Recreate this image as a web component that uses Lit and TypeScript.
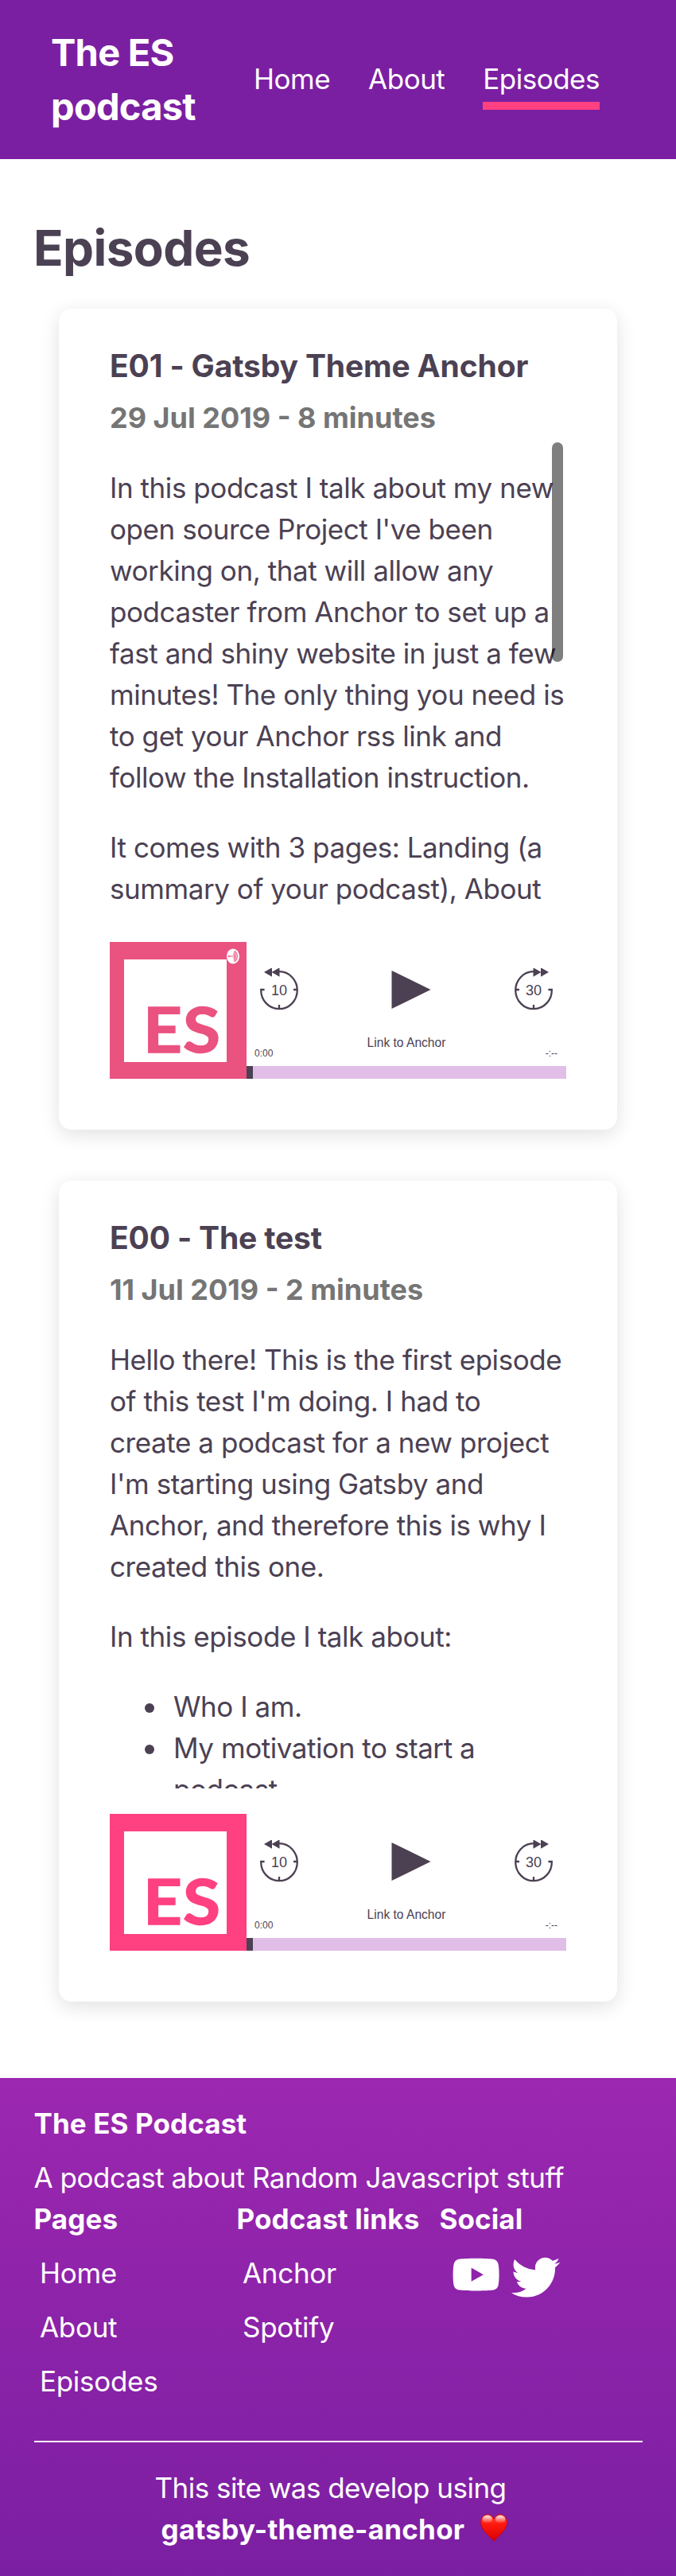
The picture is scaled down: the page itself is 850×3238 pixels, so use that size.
import { LitElement, html, css, svg } from "lit";
import { customElement, property } from "lit/decorators.js";

interface Episode {
  title: string;
  meta: string;
  paragraphs: string[];
  list: string[];
  badge: boolean;
  scrollbar: boolean;
}

const EPISODES: Episode[] = [
  {
    title: "E01 - Gatsby Theme Anchor",
    meta: "29 Jul 2019 - 8 minutes",
    paragraphs: [
      "In this podcast I talk about my new\nopen source Project I've been\nworking on, that will allow any\npodcaster from Anchor to set up a\nfast and shiny website in just a few\nminutes! The only thing you need is\nto get your Anchor rss link and\nfollow the Installation instruction.",
      "It comes with 3 pages: Landing (a\nsummary of your podcast), About",
    ],
    list: [],
    badge: true,
    scrollbar: true,
  },
  {
    title: "E00 - The test",
    meta: "11 Jul 2019 - 2 minutes",
    paragraphs: [
      "Hello there! This is the first episode\nof this test I'm doing. I had to\ncreate a podcast for a new project\nI'm starting using Gatsby and\nAnchor, and therefore this is why I\ncreated this one.",
      "In this episode I talk about:",
    ],
    list: ["Who I am.", "My motivation to start a\npodcast."],
    badge: false,
    scrollbar: false,
  },
];

@customElement("episode-player")
class EpisodePlayer extends LitElement {
  @property({ type: Boolean }) badge = false;

  static styles = css`
    :host { display: flex; height: 172px; font-family: "Liberation Sans", Arial, sans-serif; color: #4b4153; }
    .cover { flex: none; width: 172px; height: 172px; display: block; color: #ff4081; }
    .cover.muted { color: #ea5280; }
    .mark { font-family: Lato, sans-serif; font-weight: 700; font-size: 79px; stroke: currentColor; stroke-width: 1.4px; }
    .panel { flex: 1; display: flex; flex-direction: column; }
    .buttons { display: flex; justify-content: space-between; padding: 33px 16px 0; height: 54px; }
    .buttons svg { display: block; }
    .seconds { font-size: 18px; }
    .link { margin-top: 30px; text-align: center; font-size: 15.6px; line-height: 20px; }
    .times { display: flex; justify-content: space-between; margin-top: -4px; padding: 0 11px 0 10px; font-size: 12px; line-height: 14px; }
    .track { display: flex; margin-top: auto; height: 16px; background: #e1bee7; }
    .played { width: 8px; background: #4b4153; }
  `;

  render() {
    return html`
      <svg class="cover ${this.badge ? "muted" : ""}" viewBox="0 0 172 172">
        <rect width="172" height="172" fill="currentColor" />
        <rect x="18" y="22" width="129" height="129" fill="#fff" />
        <text class="mark" x="42" y="139" textLength="49" lengthAdjust="spacingAndGlyphs" fill="currentColor">E</text>
        <text class="mark" x="92" y="139" textLength="47" lengthAdjust="spacingAndGlyphs" fill="currentColor">S</text>
        ${this.badge
          ? svg`<ellipse cx="155" cy="18" rx="8" ry="9.6" fill="#fff" />
            <g fill="none" stroke="currentColor" stroke-width="1.1">
              <path d="M149.5 18h6M155.5 14.8q2.6 3.2 0 6.4M156 12.6q5 5.4 0 10.8M157 11q7 7 0 14" />
            </g><circle cx="149.8" cy="18" r="1.1" fill="currentColor" />`
          : ""}
      </svg>
      <div class="panel">
        <div class="buttons">
          <svg width="50" height="54" viewBox="0 0 50 54">
            <path d="M6.6 27H2.2A22.8 23.5 0 1 0 25 4.2M43 27h5M25 46v5" fill="none" stroke="currentColor" stroke-width="2.3" />
            <path d="M6 4.2L16 -1.5V9.9zM15.5 4.2L25.5 -1.5V9.9z" fill="currentColor" transform="translate(0 .8)" />
            <text class="seconds" x="25" y="34" text-anchor="middle" fill="currentColor">10</text>
          </svg>
          <svg width="62" height="54" viewBox="0 0 62 54">
            <path d="M12.5 3v48L61.5 27z" fill="currentColor" />
          </svg>
          <svg width="50" height="54" viewBox="0 0 50 54">
            <path d="M43.4 27H47.8A22.8 23.5 0 1 1 25 4.2M7 27H2M25 46v5" fill="none" stroke="currentColor" stroke-width="2.3" />
            <path d="M44 4.2L34 -1.5V9.9zM34.5 4.2L24.5 -1.5V9.9z" fill="currentColor" transform="translate(0 .8)" />
            <text class="seconds" x="25" y="34" text-anchor="middle" fill="currentColor">30</text>
          </svg>
        </div>
        <div class="link">Link to Anchor</div>
        <div class="times"><span>0:00</span><span>-:--</span></div>
        <div class="track"><div class="played"></div></div>
      </div>
    `;
  }
}

@customElement("episode-card")
class EpisodeCard extends LitElement {
  @property({ attribute: false }) episode!: Episode;

  static styles = css`
    :host { display: block; box-sizing: border-box; height: 1032px; padding: 43px 64px 64px; border-radius: 16px; background: #fff; box-shadow: 0 6px 24px rgba(0, 0, 0, 0.12); }
    h2 { margin: 0; font-size: 39px; line-height: 58px; font-weight: 700; letter-spacing: -0.15px; white-space: nowrap; }
    .meta { margin: 10px 0 1px; font-size: 36px; line-height: 52px; font-weight: 700; letter-spacing: 0; color: #757575; white-space: nowrap; }
    .scroll { position: relative; height: 600px; margin-bottom: 32px; overflow: hidden; font-size: 35px; line-height: 52px; letter-spacing: -0.44px; }
    p { margin: 35px 0 36px; white-space: pre; }
    p + p { margin-top: 36px; }
    ul { margin: 0; padding-left: 80px; list-style: none; }
    li { position: relative; white-space: pre; }
    li::before { content: ""; position: absolute; left: -36px; top: 22px; width: 12px; height: 12px; border-radius: 50%; background: #4b4153; }
    .thumb { position: absolute; top: 4px; right: 4px; width: 14px; height: 276px; border-radius: 7px; background: rgba(0, 0, 0, 0.5); }
  `;

  render() {
    const e = this.episode;
    return html`
      <h2>${e.title}</h2>
      <div class="meta">${e.meta}</div>
      <div class="scroll">
        ${e.paragraphs.map((t) => html`<p>${t}</p>`)}
        ${e.list.length ? html`<ul>${e.list.map((t) => html`<li>${t}</li>`)}</ul>` : ""}
        ${e.scrollbar ? html`<div class="thumb"></div>` : ""}
      </div>
      <episode-player ?badge=${e.badge}></episode-player>
    `;
  }
}

@customElement("app-root")
class AppRoot extends LitElement {
  static styles = css`
    :host { display: block; min-height: 3238px; background: #fff; color: #4b4153; font-family: Inter, "Liberation Sans", sans-serif; }
    header { display: flex; justify-content: space-between; align-items: flex-start; box-sizing: border-box; height: 200px; padding: 32px 96px 0 64px; background: #7b1fa2; color: #fff; }
    .brand { width: 200px; font-size: 47px; line-height: 68px; font-weight: 700; letter-spacing: -0.75px; }
    nav { display: flex; gap: 48px; margin-top: 41px; font-size: 35px; line-height: 52px; letter-spacing: -0.5px; }
    .tab { padding-bottom: 3px; }
    .tab.active { border-bottom: 10px solid #ff4081; }
    h1 { margin: 66px 0 30px 42px; font-size: 62px; line-height: 92px; font-weight: 700; letter-spacing: -0.62px; }
    .cards { display: flex; flex-direction: column; gap: 64px; margin: 0 74px 96px; }
    footer { box-sizing: border-box; height: 626px; padding: 31px 42.5px 0; background: linear-gradient(#9c27b0, #7b1fa2); color: #fff; font-size: 35px; line-height: 52px; letter-spacing: -0.3px; }
    .strong { font-weight: 700; letter-spacing: 0.1px; white-space: nowrap; }
    .tagline { margin-top: 16px; letter-spacing: -0.45px; }
    .columns { display: grid; grid-template-columns: repeat(3, 1fr); height: 256px; }
    .item { margin: 16px 0 0 7.5px; }
    .social { display: flex; align-items: flex-start; gap: 14.4px; padding: 17px 0 0 15px; }
    .social svg { display: block; }
    .rule { height: 2px; margin-top: 49px; background: #fff; }
    .credit { margin-top: 31px; padding-right: 19px; text-align: center; letter-spacing: -0.52px; }
    .theme { display: flex; justify-content: center; align-items: flex-start; padding-right: 9px; gap: 20px; letter-spacing: 0.25px; }
    .heart { margin-top: 7px; display: block; }
  `;

  render() {
    return html`
      <header>
        <div class="brand">The ES<br />podcast</div>
        <nav>
          <span class="tab">Home</span><span class="tab">About</span><span class="tab active">Episodes</span>
        </nav>
      </header>
      <main>
        <h1>Episodes</h1>
        <div class="cards">${EPISODES.map((e) => html`<episode-card .episode=${e}></episode-card>`)}</div>
      </main>
      <footer>
        <div class="strong">The ES Podcast</div>
        <div class="tagline">A podcast about Random Javascript stuff</div>
        <div class="columns">
          <div>
            <div class="strong">Pages</div>
            <div class="item">Home</div><div class="item">About</div><div class="item">Episodes</div>
          </div>
          <div>
            <div class="strong">Podcast links</div>
            <div class="item">Anchor</div><div class="item">Spotify</div>
          </div>
          <div>
            <div class="strong">Social</div>
            <div class="social">
              <svg width="61.2" height="54.4" viewBox="0 0 576 512" fill="#fff"><path d="M549.655 124.083c-6.281-23.65-24.787-42.276-48.284-48.597C458.781 64 288 64 288 64S117.22 64 74.629 75.486c-23.497 6.322-42.003 24.947-48.284 48.597-11.412 42.867-11.412 132.305-11.412 132.305s0 89.438 11.412 132.305c6.281 23.65 24.787 41.5 48.284 47.821C117.22 448 288 448 288 448s170.78 0 213.371-11.486c23.497-6.321 42.003-24.171 48.284-47.821 11.412-42.867 11.412-132.305 11.412-132.305s0-89.438-11.412-132.305zm-317.51 213.508V175.185l142.739 81.205-142.739 81.201z" /></svg>
              <svg width="61.3" height="61.3" viewBox="0 0 512 512" fill="#fff"><path d="M459.37 151.716c.325 4.548.325 9.097.325 13.645 0 138.72-105.583 298.558-298.558 298.558-59.452 0-114.68-17.219-161.137-47.106 8.447.974 16.568 1.299 25.34 1.299 49.055 0 94.213-16.568 130.274-44.832-46.132-.975-84.792-31.188-98.112-72.772 6.498.974 12.995 1.624 19.818 1.624 9.421 0 18.843-1.3 27.614-3.573-48.081-9.747-84.143-51.98-84.143-102.985v-1.299c13.969 7.797 30.214 12.67 47.431 13.319-28.264-18.843-46.781-51.005-46.781-87.391 0-19.492 5.197-37.36 14.294-52.954 51.655 63.675 129.3 105.258 216.365 109.807-1.624-7.797-2.599-15.918-2.599-24.04 0-57.828 46.782-104.934 104.934-104.934 30.213 0 57.502 12.67 76.67 33.137 23.715-4.548 46.456-13.32 66.599-25.34-7.798 24.366-24.366 44.833-46.132 57.827 21.117-2.273 41.584-8.122 60.426-16.243-14.292 20.791-32.161 39.308-52.628 54.253z" /></svg>
            </div>
          </div>
        </div>
        <div class="rule"></div>
        <div class="credit">This site was develop using</div>
        <div class="theme strong">
          <span>gatsby-theme-anchor</span>
          <svg class="heart" width="34" height="35" viewBox="0 0 34 35">
            <defs>
              <linearGradient id="body" x1="0" y1="0" x2="0" y2="1"><stop offset="0" stop-color="#ff5a4a" /><stop offset=".35" stop-color="#ff1a10" /><stop offset="1" stop-color="#d80000" /></linearGradient>
              <linearGradient id="shine" x1="0" y1="0" x2="0" y2="1"><stop offset="0" stop-color="#fff" stop-opacity=".85" /><stop offset="1" stop-color="#fff" stop-opacity="0" /></linearGradient>
            </defs>
            <path d="M17 34.5C15 30 .5 21.500 .5 10.500 .5 4.500 4.500 .8 9 .8c4 0 6.800 2.300 8 5.700C18.200 3.100 21 .8 25 .8c4.500 0 8.500 3.700 8.500 9.700C33.500 21.500 19 30 17 34.500z" fill="url(#body)" stroke="#c40008" stroke-width=".8" />
            <ellipse cx="8.800" cy="6.800" rx="6" ry="5" fill="url(#shine)" />
            <ellipse cx="25.200" cy="6.800" rx="6" ry="5" fill="url(#shine)" />
          </svg>
        </div>
      </footer>
    `;
  }
}
